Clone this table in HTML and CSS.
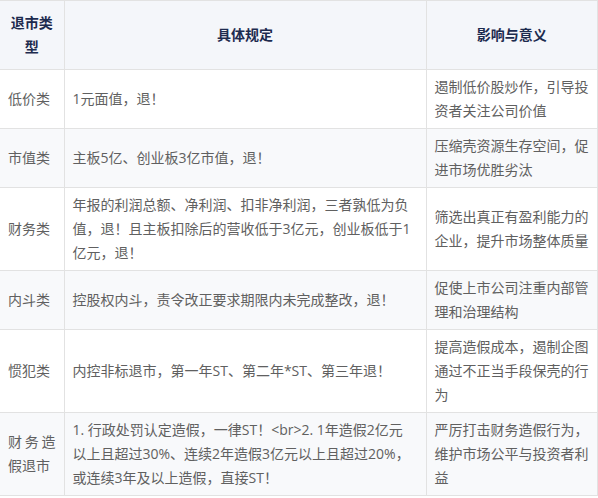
FILE: index.html
```html
<!DOCTYPE html>
<html>
  <head>
    <meta charset="utf-8">
    <link rel="stylesheet" href="styles.css">
  </head>
  <body>
    <table class="rule-table">
      <colgroup>
        <col class="col-type">
        <col class="col-rule">
        <col class="col-effect">
      </colgroup>
      <thead>
        <tr>
          <th>退市类型</th>
          <th>具体规定</th>
          <th>影响与意义</th>
        </tr>
      </thead>
      <tbody>
        <tr>
          <td class="type">低价类</td>
          <td class="rule">1元面值，退！</td>
          <td>遏制低价股炒作，引导投资者关注公司价值</td>
        </tr>
        <tr>
          <td class="type">市值类</td>
          <td class="rule">主板5亿、创业板3亿市值，退！</td>
          <td>压缩壳资源生存空间，促进市场优胜劣汰</td>
        </tr>
        <tr>
          <td class="type">财务类</td>
          <td class="rule">年报的利润总额、净利润、扣非净利润，三者孰低为负值，退！且主板扣除后的营收低于3亿元，创业板低于1亿元，退！</td>
          <td>筛选出真正有盈利能力的企业，提升市场整体质量</td>
        </tr>
        <tr>
          <td class="type">内斗类</td>
          <td class="rule">控股权内斗，责令改正要求期限内未完成整改，退！</td>
          <td>促使上市公司注重内部管理和治理结构</td>
        </tr>
        <tr>
          <td class="type">惯犯类</td>
          <td class="rule">内控非标退市，第一年ST、第二年*ST、第三年退！</td>
          <td>提高造假成本，遏制企图通过不正当手段保壳的行为</td>
        </tr>
        <tr>
          <td class="type">财务造假退市</td>
          <td class="rule">1. 行政处罚认定造假，一律ST！&lt;br&gt;2. 1年造假2亿元以上且超过30%、连续2年造假3亿元以上且超过20%，或连续3年及以上造假，直接ST！</td>
          <td>严厉打击财务造假行为，维护市场公平与投资者利益</td>
        </tr>
      </tbody>
    </table>
  </body>
</html>
```

FILE: styles.css
```css
body {
  margin: 0;
  background: #fff;
  font-family: "Open Sans", "Noto Sans CJK SC", sans-serif;
  font-size: 14px;
  color: #606060;
}

.rule-table {
  width: 598px;
  border-collapse: collapse;
  table-layout: fixed;
  border-top: 1px solid #e9e9e9;
}

.col-type { width: 64px; }
.col-rule { width: 362px; }

.rule-table th,
.rule-table td {
  border: 1px solid #e2e2e2;
  line-height: 24px;
  vertical-align: middle;
  word-break: break-all;
}

.rule-table tr > :first-child { border-left: none; }

.rule-table th {
  padding: 10px 8px;
  background: #f4f6fa;
  color: #1d2b4f;
  font-weight: bold;
  text-align: center;
}

.rule-table td {
  padding: 5px 8px;
  text-align: left;
}

.rule-table td.rule {
  padding-right: 12px;
}

.rule-table td.type {
  text-align: justify;
  text-justify: inter-character;
}

.rule-table tbody tr:nth-child(even) td {
  background: #f8f9fb;
}
```
